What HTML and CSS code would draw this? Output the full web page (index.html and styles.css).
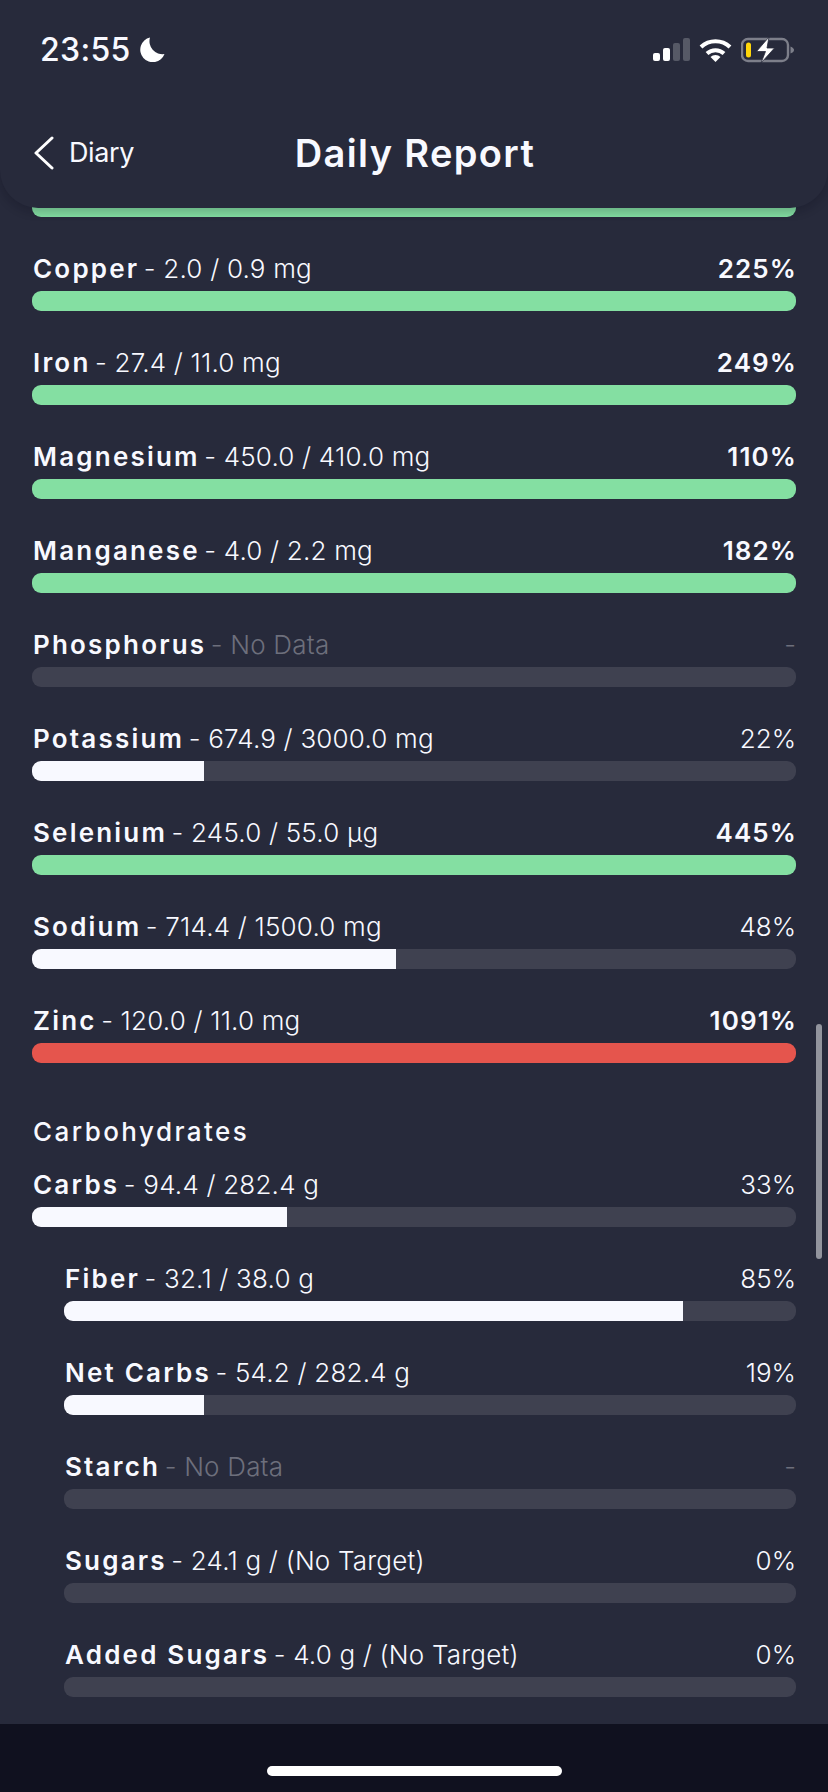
FILE: index.html
```html
<!DOCTYPE html>
<html lang="en">
<head>
<meta charset="utf-8">
<title>Daily Report</title>
<link rel="stylesheet" href="styles.css">
</head>
<body>
<div class="screen">
  <header class="header">
    <div class="status">
      <div class="clock">
        <span class="time">23:55</span>
        <svg class="moon" viewBox="0 0 25 25"><path d="M10 0.500A12.500 12.500 0 1 0 24.500 17A13 13 0 0 1 10 0.500Z" fill="#fff"/></svg>
      </div>
      <div class="sys">
        <svg class="signal" viewBox="0 0 37 23"><rect x="0" y="15" width="7" height="8" rx="2" fill="#fff"/><rect x="10" y="10" width="7" height="13" rx="2" fill="#fff"/><rect x="20" y="5" width="7" height="18" rx="2" fill="#565966"/><rect x="30" y="0" width="7" height="23" rx="2" fill="#565966"/></svg>
        <svg class="wifi" viewBox="0 0 33 24"><path d="M2 9A21 21 0 0 1 31 9" fill="none" stroke="#fff" stroke-width="4"/><path d="M8 15.500A12.500 12.500 0 0 1 25 15.500" fill="none" stroke="#fff" stroke-width="4"/><path d="M16.500 24L11.500 19A7 7 0 0 1 21.500 19Z" fill="#fff"/></svg>
        <svg class="battery" viewBox="0 0 53 26"><rect x="1" y="2" width="46" height="22" rx="6" fill="none" stroke="#7d7f8a" stroke-width="2.400"/><path d="M49.500 9.500Q53 11 53 13Q53 15 49.500 16.500Z" fill="#7d7f8a"/><rect x="5" y="5.500" width="5" height="15" rx="2.500" fill="#ffd60a"/><path d="M28 0L15.500 14.500H24.500L20 26L33.500 11H26Z" fill="#fff" stroke="#272a3b" stroke-width="0.800"/></svg>
      </div>
    </div>
    <nav class="nav">
      <div class="back">
        <svg class="chev" viewBox="0 0 20 34"><path d="M18 2L2 17L18 32" fill="none" stroke="#fff" stroke-width="3" stroke-linecap="round" stroke-linejoin="round"/></svg>
        <span class="back-label">Diary</span>
      </div>
      <h1 class="title">Daily Report</h1>
    </nav>
  </header>

  <main class="list">
    <section class="group">
      <div class="row clipped"><div class="track"><div class="fill good full"></div></div></div>
      <div class="row">
        <div class="line"><span class="text"><b>Copper</b> - 2.0 / 0.9 mg</span><span class="pct strong">225%</span></div>
        <div class="track"><div class="fill good full"></div></div>
      </div>
      <div class="row">
        <div class="line"><span class="text"><b>Iron</b> - 27.4 / 11.0 mg</span><span class="pct strong">249%</span></div>
        <div class="track"><div class="fill good full"></div></div>
      </div>
      <div class="row">
        <div class="line"><span class="text"><b>Magnesium</b> - 450.0 / 410.0 mg</span><span class="pct strong">110%</span></div>
        <div class="track"><div class="fill good full"></div></div>
      </div>
      <div class="row">
        <div class="line"><span class="text"><b>Manganese</b> - 4.0 / 2.2 mg</span><span class="pct strong">182%</span></div>
        <div class="track"><div class="fill good full"></div></div>
      </div>
      <div class="row">
        <div class="line"><span class="text"><b>Phosphorus</b> <span class="none">- No Data</span></span><span class="pct none">-</span></div>
        <div class="track"></div>
      </div>
      <div class="row">
        <div class="line"><span class="text"><b>Potassium</b> - 674.9 / 3000.0 mg</span><span class="pct">22%</span></div>
        <div class="track"><div class="fill" style="width:172px"></div></div>
      </div>
      <div class="row">
        <div class="line"><span class="text"><b>Selenium</b> - 245.0 / 55.0 µg</span><span class="pct strong">445%</span></div>
        <div class="track"><div class="fill good full"></div></div>
      </div>
      <div class="row">
        <div class="line"><span class="text"><b>Sodium</b> - 714.4 / 1500.0 mg</span><span class="pct">48%</span></div>
        <div class="track"><div class="fill" style="width:364px"></div></div>
      </div>
      <div class="row">
        <div class="line"><span class="text"><b>Zinc</b> - 120.0 / 11.0 mg</span><span class="pct strong">1091%</span></div>
        <div class="track"><div class="fill bad full"></div></div>
      </div>
    </section>

    <section class="group second">
      <h2 class="heading">Carbohydrates</h2>
      <div class="row">
        <div class="line"><span class="text"><b>Carbs</b> - 94.4 / 282.4 g</span><span class="pct">33%</span></div>
        <div class="track"><div class="fill" style="width:255px"></div></div>
      </div>
      <div class="row sub">
        <div class="line"><span class="text"><b>Fiber</b> - 32.1 / 38.0 g</span><span class="pct">85%</span></div>
        <div class="track"><div class="fill" style="width:619px"></div></div>
      </div>
      <div class="row sub">
        <div class="line"><span class="text"><b>Net Carbs</b> - 54.2 / 282.4 g</span><span class="pct">19%</span></div>
        <div class="track"><div class="fill" style="width:140px"></div></div>
      </div>
      <div class="row sub">
        <div class="line"><span class="text"><b>Starch</b> <span class="none">- No Data</span></span><span class="pct none">-</span></div>
        <div class="track"></div>
      </div>
      <div class="row sub">
        <div class="line"><span class="text"><b>Sugars</b> - 24.1 g / (No Target)</span><span class="pct">0%</span></div>
        <div class="track"></div>
      </div>
      <div class="row sub">
        <div class="line"><span class="text"><b>Added Sugars</b> - 4.0 g / (No Target)</span><span class="pct">0%</span></div>
        <div class="track"></div>
      </div>
    </section>
    <div class="scrollbar"></div>
  </main>

  <footer class="home"><div class="indicator"></div></footer>
</div>
</body>
</html>
```
FILE: styles.css
```css
* { box-sizing: border-box; }
html, body { margin: 0; padding: 0; }
body { background: #272a3b; color: #f8f9ff; font-family: "Inter", "Liberation Sans", sans-serif; }
.screen { width: 828px; height: 1792px; display: flex; flex-direction: column; overflow: hidden; background: #272a3b; }

.header { position: relative; z-index: 2; height: 208px; flex: none; background: #272a3b; border-radius: 0 0 38px 38px; box-shadow: 0 3px 8px 2px rgba(10, 12, 24, 0.2); }
.status { display: flex; justify-content: space-between; align-items: center; height: 25px; padding: 37px 34px 0 41px; box-sizing: content-box; }
.clock { display: flex; align-items: center; gap: 9px; }
.time { font-size: 32px; font-weight: 500; line-height: 25px; letter-spacing: 0.3px; margin-left: -1px; }
.moon { width: 25px; height: 25px; display: block; }
.sys { display: flex; align-items: center; gap: 9px; }
.signal { width: 37px; height: 23px; display: block; }
.wifi { width: 33px; height: 24px; display: block; }
.battery { width: 53px; height: 26px; display: block; }

.nav { position: relative; display: flex; justify-content: center; align-items: center; height: 46px; margin-top: 68px; }
.back { position: absolute; left: 34px; top: 6px; display: flex; align-items: center; gap: 15px; }
.chev { width: 20px; height: 34px; display: block; }
.back-label { font-size: 27px; font-weight: 400; line-height: 34px; letter-spacing: -0.4px; }
.title { margin: 0 0 0 2px; font-size: 38px; font-weight: 600; line-height: 46px; letter-spacing: 1.35px; }

.list { position: relative; flex: 1; margin-top: -11px; padding: 0 32px; overflow: hidden; }
.group { display: flex; flex-direction: column; gap: 33px; }
.second { margin-top: 50px; }
.heading { margin: 0 0 -16px 1px; padding-top: 2px; height: 36px; font-size: 26px; font-weight: 500; line-height: 34px; letter-spacing: 2.45px; }
.row { display: flex; flex-direction: column; gap: 5px; }
.sub { padding-left: 32px; }
.line { display: flex; justify-content: space-between; align-items: center; height: 36px; padding: 2px 0 0 1px; font-size: 26px; line-height: 34px; font-weight: 300; letter-spacing: 0.2px; white-space: nowrap; }
.text b { font-weight: 600; letter-spacing: 2.2px; margin-right: -3px; }
.pct { letter-spacing: 0; }
.pct.strong { font-weight: 600; letter-spacing: 1.1px; margin-right: -1px; }
.none { color: #6d6f7c; }
.track { height: 20px; border-radius: 9px; background: #3f4150; overflow: hidden; }
.fill { height: 100%; background: #f8f9ff; }
.full { width: 100%; }
.good { background: #84dfa2; }
.bad { background: #e5554d; }
.scrollbar { position: absolute; right: 6px; top: 827px; width: 6px; height: 235px; border-radius: 3px; background: #92949d; }

.home { flex: none; height: 68px; background: #10111f; display: flex; justify-content: center; padding-top: 42px; }
.indicator { width: 295px; height: 10px; border-radius: 5px; background: #fff; }
```
